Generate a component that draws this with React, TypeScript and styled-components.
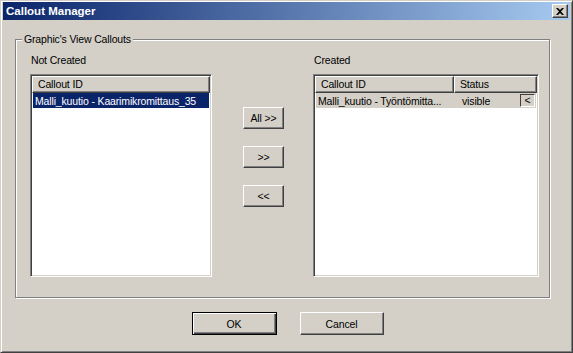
import styled, {createGlobalStyle} from "styled-components";

const GlobalStyle = createGlobalStyle`
    body {
        margin: 0;
        background: #d4d0c8;
        font-family: Tahoma, "Liberation Sans", Arial, sans-serif;
        font-size: 10.5px;
        letter-spacing: -0.15px;
    }
`;

const Window = styled.div`
    width: 573px;
    height: 353px;
    box-sizing: border-box;
    background: #d4d0c8;
    border: 1px solid;
    border-color: #d4d0c8 #404040 #404040 #d4d0c8;
    box-shadow: inset 1px 1px #ffffff, inset -1px -1px #808080;
    padding: 1px 2px 2px 2px;
    display: flex;
    flex-direction: column;
`;

const TitleBar = styled.div`
    height: 18px;
    display: flex;
    align-items: center;
    justify-content: space-between;
    padding: 0 2px 0 3px;
    background: linear-gradient(to right, #0a246a, #a6caf0);
    color: #ffffff;
    font-weight: bold;
    font-size: 11.5px;
    letter-spacing: 0;
`;

const CloseButton = styled.div`
    width: 16px;
    height: 14px;
    box-sizing: border-box;
    background: #d4d0c8;
    border: 1px solid;
    border-color: #ffffff #404040 #404040 #ffffff;
    box-shadow: inset -1px -1px #808080;
    display: flex;
    align-items: center;
    justify-content: center;
`;

const Body = styled.div`
    display: flex;
    flex-direction: column;
    padding: 19px 0 0 12px;
`;

const Group = styled.div`
    position: relative;
    width: 535px;
    height: 259px;
    box-sizing: border-box;
    border: 1px solid #808080;
    box-shadow: inset 1px 1px #ffffff, 1px 1px #ffffff;
    padding: 13px 9px 20px 14px;
    display: flex;
`;

const GroupLabel = styled.span`
    position: absolute;
    top: -8px;
    left: 6px;
    padding: 0 2px;
    background: #d4d0c8;
    line-height: 14px;
`;

const Column = styled.div<{ $width: number }>`
    width: ${p => p.$width}px;
    display: flex;
    flex-direction: column;
`;

const Caption = styled.div`
    height: 21px;
    padding-left: 1px;
    line-height: 14px;
`;

const ListBox = styled.div`
    flex: 1;
    background: #ffffff;
    border: 1px solid;
    border-color: #808080 #ffffff #ffffff #808080;
    box-shadow: inset 1px 1px #404040, inset -1px -1px #d4d0c8;
    padding: 1px;
    display: flex;
    flex-direction: column;
`;

const Header = styled.div`
    display: flex;
    height: 17px;
`;

const HeaderCell = styled.div<{ $width?: number }>`
    ${p => (p.$width ? `width: ${p.$width}px;` : "flex: 1;")}
    box-sizing: border-box;
    background: #d4d0c8;
    border: 1px solid;
    border-color: #ffffff #404040 #404040 #ffffff;
    box-shadow: inset -1px -1px #808080;
    padding: 1px 5px;
    line-height: 13px;
    white-space: nowrap;
`;

const Row = styled.div<{ $active?: boolean }>`
    display: flex;
    align-items: center;
    height: 15px;
    margin: 0 1px;
    background: ${p => (p.$active ? "#0a246a" : "#d4d0c8")};
    color: ${p => (p.$active ? "#ffffff" : "#000000")};
    white-space: nowrap;
`;

const RowCell = styled.div<{ $width?: number }>`
    ${p => (p.$width ? `width: ${p.$width}px;` : "flex: 1;")}
    padding-left: 2px;
    overflow: hidden;
`;

const RowButton = styled.div`
    width: 15px;
    height: 13px;
    box-sizing: border-box;
    margin-right: 1px;
    border: 1px solid;
    border-color: #404040 #ffffff #ffffff #404040;
    background: #d4d0c8;
    display: flex;
    align-items: center;
    justify-content: center;
    line-height: 1;
`;

const Middle = styled.div`
    width: 101px;
    display: flex;
    flex-direction: column;
    padding: 54px 0 0 31px;
    box-sizing: border-box;
    gap: 17px;
`;

const Button = styled.button<{ $default?: boolean; $w: number; $h: number }>`
    width: ${p => p.$w}px;
    height: ${p => p.$h}px;
    box-sizing: border-box;
    font-family: inherit;
    font-size: 10.5px;
    letter-spacing: -0.15px;
    color: #000;
    background: #d4d0c8;
    border: 1px solid;
    border-color: ${p => (p.$default ? "#000000" : "#ffffff #404040 #404040 #ffffff")};
    box-shadow: ${p =>
        p.$default
            ? "inset 1px 1px #ffffff, inset -1px -1px #404040, inset -2px -2px #808080"
            : "inset -1px -1px #808080"};
    padding: 0;
    cursor: pointer;
`;

const Footer = styled.div`
    display: flex;
    justify-content: center;
    gap: 23px;
    padding-top: 14px;
    padding-right: 10px;
`;

const App = () => {
    return (
        <>
            <GlobalStyle/>
            <Window>
                <TitleBar>
                    <span>Callout Manager</span>
                    <CloseButton>
                        <svg width="8" height="7" viewBox="0 0 8 7">
                            <path d="M0 0h2l2 2 2-2h2L5 3.5 8 7H6L4 5 2 7H0l3-3.5z" fill="#000"/>
                        </svg>
                    </CloseButton>
                </TitleBar>
                <Body>
                    <Group>
                        <GroupLabel>Graphic's View Callouts</GroupLabel>
                        <Column $width={182}>
                            <Caption>Not Created</Caption>
                            <ListBox>
                                <Header>
                                    <HeaderCell>Callout ID</HeaderCell>
                                </Header>
                                <Row $active>
                                    <RowCell>Malli_kuutio - Kaarimikromittaus_35</RowCell>
                                </Row>
                            </ListBox>
                        </Column>
                        <Middle>
                            <Button $w={41} $h={22}>All &gt;&gt;</Button>
                            <Button $w={41} $h={22}>&gt;&gt;</Button>
                            <Button $w={41} $h={22}>&lt;&lt;</Button>
                        </Middle>
                        <Column $width={226}>
                            <Caption>Created</Caption>
                            <ListBox>
                                <Header>
                                    <HeaderCell $width={139}>Callout ID</HeaderCell>
                                    <HeaderCell>Status</HeaderCell>
                                </Header>
                                <Row>
                                    <RowCell $width={142}>Malli_kuutio - Työntömitta...</RowCell>
                                    <RowCell>visible</RowCell>
                                    <RowButton>&lt;</RowButton>
                                </Row>
                            </ListBox>
                        </Column>
                    </Group>
                    <Footer>
                        <Button $default $w={85} $h={23}>OK</Button>
                        <Button $w={84} $h={23}>Cancel</Button>
                    </Footer>
                </Body>
            </Window>
        </>
    );
};

export default App;
